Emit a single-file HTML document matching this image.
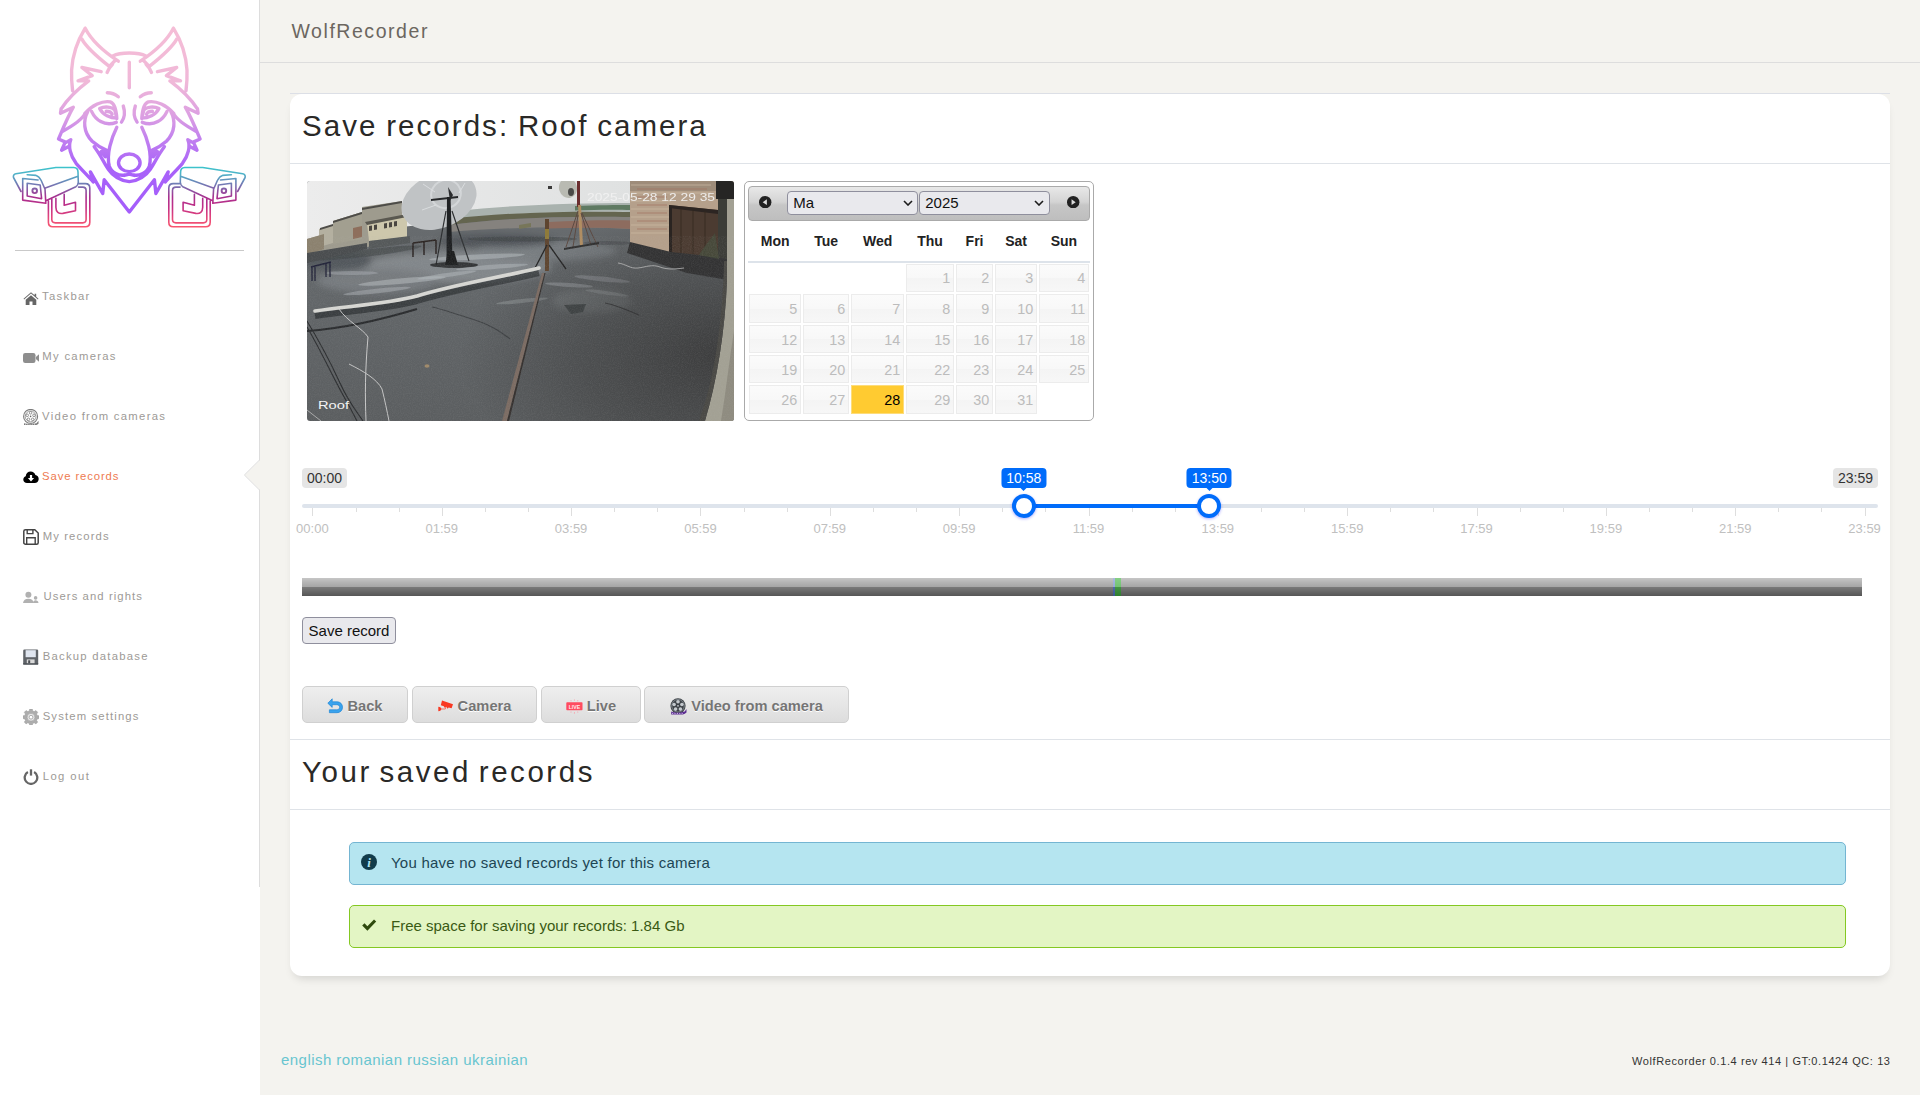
<!DOCTYPE html>
<html lang="en">
<head>
<meta charset="utf-8">
<title>WolfRecorder</title>
<style>
*{box-sizing:border-box}
html,body{margin:0;padding:0}
body{width:1920px;height:1095px;overflow:hidden;background:#f4f3ef;font-family:"Liberation Sans",sans-serif;color:#252422;position:relative}
a{text-decoration:none;color:inherit}
/* sidebar */
.sidebar{position:absolute;left:0;top:0;width:260px;height:1095px;background:#fff}
.sidebar .edge{position:absolute;left:259px;top:0;width:1px;height:887px;background:#ddd}
.sidebar .notch{position:absolute;left:244px;top:460px;width:16px;height:30px}
.logo{position:absolute;left:0;top:0;width:260px;height:240px}
.sidebar hr{position:absolute;left:15px;top:250px;width:229px;height:1px;border:0;margin:0;background:#c9c9c9}
.nav a{position:absolute;font-size:11.3px;line-height:14px;color:#9d9a96;white-space:nowrap}
.nav a.active{color:#ee7a51}
.nav i{position:absolute;top:-1px;width:16px;height:16px}.nav i{position:absolute;width:16px;height:16px}.nav i{position:absolute;width:16px;height:16px}.nav svg{display:block;width:16px;height:16px}
/* navbar */
.navbar{position:absolute;left:260px;top:0;width:1660px;height:63px;border-bottom:1px solid #ddd}
.brand{position:absolute;left:31.500px;top:19px;font-size:19.500px;line-height:24px;color:#6b6660;letter-spacing:1.550px;white-space:nowrap}
/* card */
.card{position:absolute;left:290px;top:94px;width:1600px;height:882px;background:#fff;border-radius:12px;box-shadow:0 6px 10px -4px rgba(0,0,0,.15)}
.cardtop{position:absolute;left:290px;top:93px;width:1600px;height:1px;background:#dcdfe6}
.card h2{position:absolute;left:11px;margin:0;font-weight:400;font-size:29.500px;line-height:36px;color:#2a2927;white-space:nowrap}
.card .rule{position:absolute;left:0;width:1600px;height:1px;background:#dfe3e8}
.cam{position:absolute;left:17px;top:87px;width:427px;height:240px;display:block}

/* datepicker */
.dp{position:absolute;left:454px;top:87px;width:350px;height:240px;border:1px solid #aaa;border-radius:5px;background:#fff;font-size:14px;color:#222}
.dp>*{position:absolute}
.dph{left:3.200px;top:3.500px;width:341.800px;height:35px;border:1px solid #aaa;border-radius:4px;background:linear-gradient(#e8e8e8 0,#d4d4d4 45%,#c6c6c6 55%,#bebebe 100%)}
.dph>*{position:absolute}
.dpi{top:9.300px;width:12.400px;height:12.400px}
.dpi svg{display:block;width:100%;height:100%}
.sel{top:4.800px;height:23.400px;border:1px solid #8f8f9d;border-radius:4px;background:#e9e9ed;font-size:15px;line-height:21px;padding-left:5px;color:#111}
.sel svg{position:absolute;right:4.500px;top:8px;width:10px;height:6px}
.dn{top:49px;height:20px;line-height:20px;text-align:center;font-weight:700;color:#222}
.dsep{left:3.200px;top:79px;width:341.800px;height:2px;background:#dde3ea}
.dc{font-size:14.400px;border:1px solid #ececec;background:linear-gradient(#fbfbfb 0,#f8f8f8 50%,#f4f4f4 51%,#f7f7f7 100%);color:#bcbcbc;text-align:right;padding-right:2.700px}
.dc.sel28{background:#ffcb31;border-color:#fddc7a;color:#000}
/* ion range slider (round) */
.irs{position:absolute;left:12px;top:374px;width:1576px;height:65px;font-size:14px}
.irs>*{position:absolute}
.irs-min,.irs-max{top:0;height:20px;line-height:20px;padding:0 5px;background:#e5e5e5;color:#333;border-radius:4px}
.irs-min{left:0}.irs-max{right:0}
.irs-line{left:0;top:36px;width:1576px;height:4px;border-radius:4px;background:#dee4ec}
.irs-bar{top:36px;height:4px;background:#006cfa}
.irs-lab{top:0;height:20px;line-height:20px;padding:0 5px;background:#006cfa;color:#fff;border-radius:4px;transform:translateX(-50%);white-space:nowrap}
.irs-lab:after{content:"";position:absolute;left:50%;bottom:-6px;margin-left:-3px;border:3px solid transparent;border-top-color:#006cfa}
.irs-h{top:26px;width:24px;height:24px;border:4px solid #006cfa;border-radius:24px;background:#fff;box-shadow:0 1px 3px rgba(0,0,255,.3)}
.gp{top:40px;width:1px;height:4px;background:#dedede}
.gp.big{height:8px}
.gt{top:56px;height:9px;line-height:9px;font-size:13px;color:silver;transform:translateX(-50%);white-space:nowrap}
.tl{position:absolute;left:12px;top:484px;width:1560px;height:18px;background:linear-gradient(#c6c6c6 0,#b4b4b4 25%,#a6a6a6 49%,#7a7a7a 50%,#686868 75%,#565656 100%)}
.tl i{position:absolute;top:0;height:18px}
.sbtn{position:absolute;left:12px;top:523px;width:94px;height:27px;border:1px solid #8f8f9d;border-radius:4px;background:#e9e9ed;font-size:15px;line-height:25px;text-align:center;color:#111;white-space:nowrap}
/* jquery ui buttons */
.btns{position:absolute;left:0;top:592px;width:1600px;height:37px}
.ub{position:absolute;top:0;height:37px;border:1px solid #d0d0d0;border-radius:5px;background:linear-gradient(#eeeeee 0,#e6e6e6 50%,#dddddd 100%);font-size:14.670px;font-weight:700;color:#757575;text-shadow:0 1px 0 #fff;text-align:center;white-space:nowrap;line-height:38px}
.ub span{display:inline-block;position:relative}
.ub .bi{text-shadow:none;display:inline-block;vertical-align:middle;margin:-2px 4px 0 0}
/* alerts */
.al{position:absolute;left:59px;width:1497px;height:43px;border-radius:5px;font-size:15px;line-height:18px;letter-spacing:.23px;white-space:nowrap}
.al svg{position:absolute;left:11px;top:11px;width:16px;height:16px}
.al span{position:absolute;left:41px;top:10.500px}
.al.info{background:#b5e5f0;border:1px solid #74b5d2;color:#1d4654}
.al.ok{background:#e3f5c4;border:1px solid #84c822;color:#3a5a14}
/* footer */
.langs{position:absolute;left:281px;top:1051px;font-size:15px;line-height:18px;color:#68c5d0;letter-spacing:.45px;white-space:nowrap}
.ver{position:absolute;right:30px;top:1054px;font-size:11px;line-height:15px;color:#333;letter-spacing:.59px;white-space:nowrap;margin-right:-.59px}
</style>
</head>
<body>
<div class="sidebar">
  <div class="edge"></div>
  <svg class="notch" viewBox="0 0 16 30"><path d="M16 0L.8 15L16 30Z" fill="#f4f3ef"/><path d="M15.500 0L.4 15L15.500 30" fill="none" stroke="#dcdcdc" stroke-width="1"/></svg>
  <!--LOGOSTART--><svg class="logo" viewBox="0 0 260 240" width="260" height="240">
<defs>
<linearGradient id="lgw" gradientUnits="userSpaceOnUse" x1="0" y1="27" x2="0" y2="212"><stop offset="0" stop-color="#f5bdd6"/><stop offset=".3" stop-color="#f0b8d8"/><stop offset=".48" stop-color="#dc9fe2"/><stop offset=".62" stop-color="#bf7df0"/><stop offset=".76" stop-color="#a962f9"/><stop offset="1" stop-color="#a45dfb"/></linearGradient>
<linearGradient id="lgc" gradientUnits="userSpaceOnUse" x1="0" y1="167" x2="0" y2="227"><stop offset="0" stop-color="#3cc3cb"/><stop offset=".12" stop-color="#4fb2c8"/><stop offset=".32" stop-color="#7a6fb0"/><stop offset=".5" stop-color="#a8308f"/><stop offset=".68" stop-color="#c42f86"/><stop offset=".85" stop-color="#e4477b"/><stop offset="1" stop-color="#f9566f"/></linearGradient>
</defs>
<g fill="none" stroke="url(#lgc)" stroke-width="1.600" stroke-linejoin="round" stroke-linecap="round"><path d="M 21.0,191.5 L 13.5,177.5 C 12.9,175.4 14.2,174.0 15.9,173.7 L 55.9,167.5 L 73.8,167.5 C 76.5,167.7 78.0,169.6 78.0,172.0 L 78.3,182.3 C 78.1,184.7 77.2,186.0 75.8,186.8 L 46.4,200.5 M 237.6,191.5 L 245.1,177.5 C 245.7,175.4 244.4,174.0 242.7,173.7 L 202.7,167.5 L 184.8,167.5 C 182.1,167.7 180.6,169.6 180.6,172.0 L 180.3,182.3 C 180.5,184.7 181.4,186.0 182.8,186.8 L 212.2,200.5 M 27.2,174.7 L 36.1,175.4 C 38.8,176.1 40.2,178.5 41.2,180.5 L 44.6,188.2 L 77.3,176.4 M 231.4,174.7 L 222.5,175.4 C 219.8,176.1 218.4,178.5 217.4,180.5 L 214.0,188.2 L 181.3,176.4 M 22.7,178.5 L 22.7,200.1 L 45.8,203.3 L 45.0,188.8 M 235.9,178.5 L 235.9,200.1 L 212.8,203.3 L 213.6,188.8 M 22.7,178.5 L 38.1,180.0 M 235.9,178.5 L 220.5,180.0 M 27.2,183.3 L 40.2,185.0 L 41.6,198.7 L 27.2,196.0 Z M 231.4,183.3 L 218.4,185.0 L 217.0,198.7 L 231.4,196.0 Z M 78.9,183.6 L 85.4,183.6 C 88.1,183.6 89.8,185.3 89.8,188.1 L 89.8,222.3 C 89.8,225.1 88.1,226.8 85.4,226.8 L 52.9,226.8 C 50.1,226.8 48.4,225.1 48.4,222.3 L 48.4,201.1 M 179.7,183.6 L 173.2,183.6 C 170.5,183.6 168.8,185.3 168.8,188.1 L 168.8,222.3 C 168.8,225.1 170.5,226.8 173.2,226.8 L 205.7,226.8 C 208.5,226.8 210.2,225.1 210.2,222.3 L 210.2,201.1 M 78.5,187.1 L 82.7,187.1 C 84.7,187.1 86.1,188.4 86.1,190.5 L 86.1,219.6 C 86.1,221.6 84.7,222.9 82.7,222.9 L 55.3,222.9 C 53.2,222.9 51.8,221.6 51.8,219.6 L 51.8,198.4 M 180.1,187.1 L 175.9,187.1 C 173.9,187.1 172.5,188.4 172.5,190.5 L 172.5,219.6 C 172.5,221.6 173.9,222.9 175.9,222.9 L 203.3,222.9 C 205.4,222.9 206.8,221.6 206.8,219.6 L 206.8,198.4 M 55.9,198.4 L 55.9,207.3 C 55.9,212.1 58.7,214.1 62.8,213.4 L 75.5,210.8 L 75.5,202.3 L 64.2,205.3 L 64.2,194.2 M 202.7,198.4 L 202.7,207.3 C 202.7,212.1 199.9,214.1 195.8,213.4 L 183.1,210.8 L 183.1,202.3 L 194.4,205.3 L 194.4,194.2"/><circle cx="34.7" cy="190.8" r="2.3" stroke-width="1.900"/><circle cx="223.9" cy="190.8" r="2.3" stroke-width="1.900"/></g>
<g fill="none" stroke="url(#lgw)" stroke-width="3.400" stroke-linejoin="round" stroke-linecap="round"><path d="M 85.2,28.2 C 79.1,38.1 72.6,53.1 71.6,70.2 C 71.3,78.3 71.9,85.3 72.6,90.8 M 173.4,28.2 C 179.5,38.1 186.0,53.1 187.0,70.2 C 187.3,78.3 186.7,85.3 186.0,90.8 M 85.2,28.2 C 90.2,38.1 100.2,49.1 118.3,61.2 M 173.4,28.2 C 168.4,38.1 158.4,49.1 140.3,61.2 M 81.9,39.1 C 86.2,47.1 95.2,55.2 109.3,66.4 L 115.9,59.8 M 176.7,39.1 C 172.4,47.1 163.4,55.2 149.3,66.4 L 142.7,59.8 M 112.5,64.2 C 109.5,67.2 107.9,69.7 107.1,72.4 M 146.1,64.2 C 149.1,67.2 150.7,69.7 151.5,72.4 M 101.2,71.7 L 81.9,67.5 L 92.2,75.7 L 78.1,80.8 L 88.7,80.9 C 80.1,87.3 68.1,98.3 61.2,108.9 M 157.4,71.7 L 176.7,67.5 L 166.4,75.7 L 180.5,80.8 L 169.9,80.9 C 178.5,87.3 190.5,98.3 197.4,108.9 M 107.3,92.8 C 111.3,92.8 115.3,94.3 118.3,96.8 M 151.3,92.8 C 147.3,92.8 143.3,94.3 140.3,96.8 M 112.8,56.0 C 120.3,51.9 138.4,51.9 145.9,56.0 M 129.3,62.2 L 129.3,87.8 M 61.2,108.6 L 60.5,113.3 L 73.3,107.2 C 68.1,116.1 63.1,128.2 58.5,139.0 L 66.1,142.4 L 70.8,139.7 C 68.1,146.2 70.1,155.3 76.1,163.3 C 79.1,166.8 88.2,176.4 93.2,181.9 L 90.4,171.9 L 102.7,193.5 L 104.2,179.7 L 129.3,212.0 M 197.4,108.6 L 198.1,113.3 L 185.3,107.2 C 190.5,116.1 195.5,128.2 200.1,139.0 L 192.5,142.4 L 187.8,139.7 C 190.5,146.2 188.5,155.3 182.5,163.3 C 179.5,166.8 170.4,176.4 165.4,181.9 L 168.2,171.9 L 155.9,193.5 L 154.4,179.7 L 129.3,212.0 M 65.1,142.4 L 61.6,150.3 L 68.7,146.4 M 193.5,142.4 L 197.0,150.3 L 189.9,146.4 M 85.4,112.9 C 82.1,120.1 72.1,126.2 62.3,131.4 M 173.2,112.9 C 176.5,120.1 186.5,126.2 196.3,131.4 M 84.7,113.6 C 92.2,105.1 102.2,100.5 110.3,101.9 C 114.3,103.1 116.3,110.1 116.8,118.6 M 173.9,113.6 C 166.4,105.1 156.4,100.5 148.3,101.9 C 144.3,103.1 142.3,110.1 141.8,118.6 M 87.7,111.6 C 83.1,120.1 83.1,132.2 92.2,141.2 C 97.2,145.7 102.2,148.3 106.7,150.3 M 170.9,111.6 C 175.5,120.1 175.5,132.2 166.4,141.2 C 161.4,145.7 156.4,148.3 151.9,150.3 M 91.7,111.6 C 95.2,119.1 104.2,127.2 116.3,122.3 M 166.9,111.6 C 163.4,119.1 154.4,127.2 142.3,122.3 M 99.7,108.6 C 104.2,106.1 112.3,106.6 114.8,110.1 L 116.8,118.1 C 110.3,118.1 103.2,115.1 99.7,108.6 M 158.9,108.6 C 154.4,106.1 146.3,106.6 143.8,110.1 L 141.8,118.1 C 148.3,118.1 155.4,115.1 158.9,108.6 M 106.2,111.3 C 109.3,111.3 111.5,112.6 112.1,114.4 M 152.4,111.3 C 149.3,111.3 147.1,112.6 146.5,114.4 M 123.3,106.1 C 125.3,112.1 124.3,118.1 121.5,122.1 M 135.3,106.1 C 133.3,112.1 134.3,118.1 137.1,122.1 M 116.8,127.2 C 111.3,138.2 106.2,154.3 109.3,166.3 C 111.3,172.4 119.3,176.4 124.8,175.0 M 141.8,127.2 C 147.3,138.2 152.4,154.3 149.3,166.3 C 147.3,172.4 139.3,176.4 133.8,175.0 M 94.2,146.7 C 100.2,154.3 104.2,163.3 108.3,169.3 C 112.3,175.4 120.3,180.9 129.3,181.6 M 164.4,146.7 C 158.4,154.3 154.4,163.3 150.3,169.3 C 146.3,175.4 138.3,180.9 129.3,181.6 M 101.2,151.5 L 105.7,150.5 L 105.2,156.8 Z M 157.4,151.5 L 152.9,150.5 L 153.4,156.8 Z M 124.3,175.4 L 129.3,174.2 M 134.3,175.4 L 129.3,174.2"/><ellipse cx="129.3" cy="162.8" rx="10.8" ry="8.8"/></g>
</svg><!--LOGOEND-->
  <hr>
  <div class="nav" id="nav">
<a style="top:289px;left:42.1px;letter-spacing:1.27px"><i style="left:-19.1px;top:2px"><svg viewBox="0 0 16 16"><path d="M8 1.300L.5 7.700l.6.700L8 2.600l6.900 5.800.6-.7-2.300-2V2.700h-1.600v1.600z" fill="#6a6a6a"/><path d="M8 4.300L2.700 8.800V14h3.800v-3.600h3V14h3.800V8.800z" fill="#666"/></svg></i>Taskbar</a>
<a style="top:349px;left:42.3px;letter-spacing:1.30px"><i style="left:-19.3px;top:0.5px"><svg viewBox="0 0 16 16"><rect x="0" y="3" width="12.500" height="10" rx="2.200" fill="#8e8e8e"/><path d="M12.900 7l3.100-2.800v7.600L12.900 9z" fill="#8e8e8e"/></svg></i>My cameras</a>
<a style="top:409px;left:42.1px;letter-spacing:1.29px"><i style="left:-19.1px;top:0px"><svg viewBox="0 0 16 16"><g fill="none" stroke="#7b7b7b"><circle cx="7.600" cy="7.400" r="7" stroke-width="1.100"/><circle cx="7.600" cy="7.400" r="5.400" stroke-width=".7"/><circle cx="7.600" cy="3.800" r="1.300" stroke-width=".8"/><circle cx="4.200" cy="6.300" r="1.300" stroke-width=".8"/><circle cx="11" cy="6.300" r="1.300" stroke-width=".8"/><circle cx="5.500" cy="10.300" r="1.300" stroke-width=".8"/><circle cx="9.700" cy="10.300" r="1.300" stroke-width=".8"/></g><circle cx="7.600" cy="7.400" r=".8" fill="#666"/><path d="M1 14.300c3.500 1 8.500 1 12.500 0l2-2.600v3c-1 .9-2 1.200-3 1.300H1z" fill="#7b7b7b"/><path d="M2.200 15.200h.9M4.400 15.200h.9M6.600 15.200h.9M8.800 15.200h.9M11 15.200h.9" stroke="#fff" stroke-width=".8"/></svg></i>Video from cameras</a>
<a class="active" style="top:469px;left:42.1px;letter-spacing:0.89px"><i style="left:-19.1px;top:0px"><svg viewBox="0 0 16 16"><path d="M4 14c-2.100 0-3.700-1.500-3.700-3.500 0-1.600 1-2.900 2.400-3.300C3 4.600 5 2.600 7.700 2.600c2.200 0 4.100 1.400 4.700 3.400 1.900.3 3.300 1.900 3.300 3.900 0 2.300-1.800 4.100-4 4.100z" fill="#000"/><path d="M6.900 6h2.200v3h2L8 12.400 4.900 9h2z" fill="#fff"/></svg></i>Save records</a>
<a style="top:529px;left:42.7px;letter-spacing:1.11px"><i style="left:-19.7px;top:0px"><svg viewBox="0 0 16 16"><path d="M2.500.8h9.300l3.400 3.200v9.700c0 .9-.7 1.500-1.600 1.500H2.500c-.9 0-1.700-.6-1.700-1.500V2.300C.8 1.400 1.600.8 2.500.8z" fill="none" stroke="#444" stroke-width="1.500"/><path d="M4.200 1v3.600h5.700V1M3.700 15V8.800h8.500V15" fill="none" stroke="#444" stroke-width="1.400"/></svg></i>My records</a>
<a style="top:589px;left:43.5px;letter-spacing:1.08px"><i style="left:-20.5px;top:1px"><svg viewBox="0 0 16 16"><circle cx="5.400" cy="4.700" r="3" fill="#b1b1b1"/><path d="M0 13c.3-2.800 2.400-4.300 5.400-4.300s5 1.500 5.400 4.300z" fill="#b1b1b1"/><circle cx="12.600" cy="7.900" r="1.800" fill="#b1b1b1"/><path d="M10 13c.2-1.900 1.100-2.700 2.600-2.700s2.700.8 2.900 2.700z" fill="#b1b1b1"/></svg></i>Users and rights</a>
<a style="top:649px;left:42.7px;letter-spacing:1.25px"><i style="left:-19.7px;top:0px"><svg viewBox="0 0 16 16"><rect x=".2" y=".6" width="15" height="15" rx="1.200" fill="#5f6368"/><rect x="2.600" y="1.200" width="10.200" height="7" fill="#dfe5ef"/><rect x="3.800" y="10.400" width="7.800" height="4.600" fill="#d9d9d9"/><rect x="5.200" y="11.300" width="2" height="3" fill="#4a4d52"/><rect x=".2" y="14.200" width="15" height="1.400" fill="#4d5156"/></svg></i>Backup database</a>
<a style="top:709px;left:42.7px;letter-spacing:1.14px"><i style="left:-19.7px;top:0px"><svg viewBox="0 0 16 16"><path d="M6.700 0h2.600l.4 2 1.500.6 1.700-1.100 1.800 1.800-1.100 1.700.6 1.500 2 .4v2.600l-2 .4-.6 1.500 1.100 1.700-1.800 1.800-1.700-1.100-1.500.6-.4 2H6.700l-.4-2-1.500-.6-1.700 1.100-1.800-1.800 1.100-1.700-.6-1.500-2-.4V6.900l2-.4.600-1.500-1.100-1.700 1.800-1.800 1.700 1.100 1.500-.6z" fill="#adadad" stroke="#9a9a9a" stroke-width=".5"/><circle cx="8" cy="8.200" r="3.900" fill="#e8e8e8"/><circle cx="8" cy="8.200" r="3.900" fill="none" stroke="#9d9d9d" stroke-width=".6"/><circle cx="8" cy="8.200" r="1.900" fill="#fff" stroke="#a5a5a5" stroke-width=".9"/></svg></i>System settings</a>
<a style="top:769px;left:42.8px;letter-spacing:1.38px"><i style="left:-19.8px;top:0px"><svg viewBox="0 0 16 16"><path d="M4.900 3.100A6.300 6.300 0 1 0 11.100 3.100" fill="none" stroke="#666" stroke-width="2.300"/><path d="M8 .3v6.300" stroke="#666" stroke-width="2.300"/></svg></i>Log out</a>
</div>
</div>
<div class="navbar"><a class="brand">WolfRecorder</a></div>
<div class="cardtop"></div>
<div class="card">
  <h2 style="top:13.700px;left:12px;letter-spacing:2.050px;word-spacing:-1.500px">Save records: Roof camera</h2>
  <div class="rule" style="top:69px"></div>
  <!--CAMSTART--><svg class="cam" viewBox="0 0 427 240" width="427" height="240">
<defs>
<linearGradient id="cg1" x1="0" y1="0" x2="0" y2="1"><stop offset="0" stop-color="#6b6f72"/><stop offset=".35" stop-color="#64686b"/><stop offset="1" stop-color="#5b5e60"/></linearGradient>
<radialGradient id="cg2" cx=".98" cy=".72" r=".62"><stop offset="0" stop-color="#2d2c2c" stop-opacity=".7"/><stop offset=".55" stop-color="#333" stop-opacity=".4"/><stop offset="1" stop-color="#333" stop-opacity="0"/></radialGradient>
<linearGradient id="cg3" x1="0" y1="0" x2="1" y2="0"><stop offset="0" stop-color="#ececec"/><stop offset="1" stop-color="#dfe1e1"/></linearGradient>
<filter id="cb1" x="-10%" y="-10%" width="120%" height="120%"><feGaussianBlur stdDeviation="3"/></filter>
<filter id="cb2"><feGaussianBlur stdDeviation=".6"/></filter>
<filter id="cn" x="0" y="0" width="100%" height="100%"><feTurbulence type="fractalNoise" baseFrequency=".9" numOctaves="2" seed="4"/><feColorMatrix values="0 0 0 0 .5  0 0 0 0 .5  0 0 0 0 .5  0 0 0 .55 -.18"/></filter>
<clipPath id="cc"><rect width="427" height="240" rx="3"/></clipPath>
</defs>
<g clip-path="url(#cc)">
<rect width="427" height="240" fill="url(#cg1)"/>
<!-- wet reflections -->
<g filter="url(#cb1)" opacity=".8">
<ellipse cx="150" cy="86" rx="95" ry="16" fill="#8a8f93"/>
<ellipse cx="70" cy="100" rx="60" ry="12" fill="#7b8084"/>
<ellipse cx="240" cy="70" rx="70" ry="10" fill="#7f8488"/>
<ellipse cx="285" cy="120" rx="40" ry="12" fill="#777b7e"/>
<ellipse cx="30" cy="80" rx="35" ry="10" fill="#50555a"/>
<ellipse cx="190" cy="60" rx="60" ry="6" fill="#4a4e52"/>
</g>
<g filter="url(#cb2)" fill="#b4b9bd">
<ellipse cx="170" cy="76" rx="48" ry="2.600" opacity=".55" transform="rotate(-3 170 76)"/>
<ellipse cx="185" cy="86" rx="36" ry="2.200" opacity=".5" transform="rotate(-4 185 86)"/>
<ellipse cx="95" cy="100" rx="44" ry="2.800" opacity=".55" transform="rotate(-5 95 100)"/>
<ellipse cx="70" cy="110" rx="34" ry="2.200" opacity=".45" transform="rotate(-6 70 110)"/>
<ellipse cx="140" cy="94" rx="30" ry="2" opacity=".5" transform="rotate(-8 140 94)"/>
<ellipse cx="45" cy="92" rx="26" ry="2" opacity=".4"/>
<ellipse cx="262" cy="104" rx="24" ry="2" opacity=".45" transform="rotate(4 262 104)"/>
<ellipse cx="295" cy="98" rx="28" ry="2.400" opacity=".4" transform="rotate(6 295 98)"/>
<ellipse cx="215" cy="120" rx="26" ry="2" opacity=".35" transform="rotate(-6 215 120)"/>
<ellipse cx="300" cy="112" rx="22" ry="1.800" opacity=".35" transform="rotate(8 300 112)"/>
</g>
<g filter="url(#cb2)" fill="#3c4044">
<ellipse cx="60" cy="72" rx="55" ry="3.500" opacity=".5" transform="rotate(-7 60 72)"/>
<ellipse cx="215" cy="58" rx="55" ry="2.500" opacity=".5"/>
<ellipse cx="300" cy="62" rx="24" ry="2" opacity=".4"/>
</g>
<rect width="427" height="240" fill="url(#cg2)"/>
<!-- sky -->
<path d="M0 0H330V32C270 30 200 33 150 40C100 46 40 50 0 60Z" fill="url(#cg3)"/>
<!-- far right horizon: fence, field, parapet -->
<path d="M150 30C200 24 270 22 325 22V31C270 30 200 32 150 38Z" fill="#a9b2ae"/>
<path d="M268 25C290 24 310 24 325 24V29C310 28.500 290 28.500 268 29.500Z" fill="#5f7a62"/>
<path d="M142 38C200 31 270 30 325 31V36C270 35 200 36 142 44Z" fill="#64654f"/>
<path d="M142 44C200 36 270 35 325 36V48C270 45 200 46 142 51Z" fill="#85827e"/>
<path d="M242 41C270 39.500 300 39 325 39.500V48C300 46.500 270 46.500 242 47.500Z" fill="#8d6c5f"/>
<path d="M212 44l12-2v4l-12 2z" fill="#77765a"/>
<!-- left buildings -->
<path d="M0 58L18 53V47L26 44V40L55 31V26L95 20V60L60 66L0 78Z" fill="#9e9b8e"/>
<path d="M12 48L26 44V62L12 66Z" fill="#b4b0a0"/>
<path d="M26 40L55 31V58L26 63Z" fill="#a29f90"/>
<path d="M55 27L95 20V22L55 29ZM26 40L55 31V33L26 42ZM13 47L26 43V45L13 49Z" fill="#4d4c48"/>
<path d="M60 42L100 35V56L62 60Z" fill="#cdc7ac"/>
<path d="M58 41L100 33V36L60 44Z" fill="#5a5850"/>
<path d="M62 60L103 55V62L62 68Z" fill="#55595a"/>
<path d="M62 45l3-.6v5l-3 .6zm5-1l3-.6v5l-3 .6zm10-1.5l3-.6v5l-3 .6zm5-1l3-.6v5l-3 .6zm5-1l3-.6v5l-3 .6z" fill="#4a4640"/>
<path d="M46 47L55 45V56L46 58Z" fill="#8e6f5c"/>
<path d="M0 58L17 53V68L0 74Z" fill="#8c826f"/>
<path d="M0 72L60 62V68L0 82Z" fill="#4a4d4f"/>
<!-- big dish -->
<g>
<ellipse cx="132" cy="20" rx="39" ry="27" transform="rotate(-22 132 20)" fill="#c0c3c5"/>
<ellipse cx="139" cy="13" rx="15" ry="14" transform="rotate(-22 139 13)" fill="none" stroke="#d3d6d8" stroke-width="2"/>
<path d="M116 3l12 8M115 29l14-5M158 2l-6 10" stroke="#d9dcde" stroke-width="1" fill="none"/>
<path d="M124 18l27-3v2l-27 3z" fill="#26282a"/>
<path d="M140 16l3.500 0 2 62h-6z" fill="#1f2123"/>
<path d="M141 6l5 8-3 6z" fill="#2a2c2e"/>
<path d="M139 30L129 84M145 30l17 50" stroke="#2e3032" stroke-width="1.2" fill="none"/>
<path d="M138 84l3-14h6l4 14z" fill="#1d1e1f"/>
<ellipse cx="147" cy="84" rx="24" ry="3" fill="#222324" opacity=".8"/>
</g>
<!-- small frames -->
<path d="M106 62v14M117 60v14M129 59v14M106 62l23-3" stroke="#2d2624" stroke-width="1.5" fill="none"/>
<path d="M5 86v14M8 86v14M19 82v14M23 82v14M4 86l20-5" stroke="#23243a" stroke-width="1.3" fill="none"/>
<!-- right dish + poles -->
<ellipse cx="261" cy="7" rx="9" ry="10" transform="rotate(-15 261 7)" fill="#b9bab2"/>
<ellipse cx="264" cy="11" rx="3" ry="4" fill="#4a4a48"/>
<path d="M242 8c6 8 14 8 22 12" stroke="#e4e4e4" stroke-width=".8" fill="none"/>
<rect x="241" y="5" width="4" height="3" fill="#3b3b3b"/>
<rect x="270" y="0" width="3" height="26" fill="#6a2e2f"/>
<path d="M271 24l3 0 2 42h-3z" fill="#b08d62"/>
<path d="M271 30L259 66M271 34l-5 32M274 32l10 32M275 32l16 34" stroke="#5c4a42" stroke-width="1" fill="none"/>
<path d="M257 67l35-6v2l-35 6z" fill="#2f2f2f"/>
<rect x="238" y="38" width="4" height="52" fill="#5e4530"/>
<rect x="238" y="48" width="4" height="10" fill="#8f7b3a"/>
<path d="M240 64L227 89M242 64l17 24" stroke="#262626" stroke-width="1.3" fill="none"/>
<!-- brick building -->
<path d="M323 0H427V86L323 62Z" fill="#b5a08b"/>
<path d="M323 0H410V10H323Z" fill="#8f7f6f" opacity=".6"/>
<path d="M324 4h80M324 12h80M324 20h40M324 28h38M324 36h38M324 44h38M324 52h38" stroke="#c9b8a4" stroke-width="1.6" opacity=".5"/>
<path d="M330 8h70M330 16h30M330 24h30M330 32h30M330 40h30M330 48h30" stroke="#a2705e" stroke-width="1.6" opacity=".45"/>
<path d="M362 24L411 29V76L364 72Z" fill="#4b3b31"/>
<path d="M362 24L411 29V33L362 27Z" fill="#2c2522"/>
<path d="M374 28v45M386 29v46M398 30v46" stroke="#33291f" stroke-width="1" opacity=".8"/>
<path d="M362 26l3 0v46l-3-1z" fill="#2a2421"/>
<path d="M409 0H427V18H409Z" fill="#262524"/><path d="M411 18H421V80L411 76Z" fill="#3c3d38"/>
<path d="M323 61L364 71L411 76L427 80V100L380 92L320 72Z" fill="#333334"/>
<path d="M392 74c5-8 10-14 16-22l4 26z" fill="#464c3c" opacity=".85"/>
<!-- right wall strip -->
<path d="M420 18H427V240H398C410 200 418 150 420 100Z" fill="#a3a194"/>
<path d="M417 80C416 130 409 195 392 240H398C410 200 418 150 420 100V80Z" fill="#4a4945"/>
<path d="M427 150c-5 30-8 60-13 90h13z" fill="#8f8c80"/>
<!-- wavy cable -->
<path d="M311 82c8 1 12 6 20 5s14-4 22-1 16 2 24 1" stroke="#b9b9b9" stroke-width=".8" fill="none"/>
<!-- white log -->
<path d="M8 131C40 126 80 124 110 116C150 104 190 98 232 88" stroke="#1e2022" stroke-width="6" fill="none" opacity=".55" transform="translate(0 4)"/>
<path d="M8 130C40 125 80 123 110 115C150 103 190 97 232 87" stroke="#d8d8d4" stroke-width="3.600" fill="none" stroke-linecap="round"/>
<path d="M0 150C30 148 70 140 110 128" stroke="#2a2c2e" stroke-width="2" fill="none"/>
<!-- rail -->
<path d="M235 92L195 240H200L237.500 92Z" fill="#7c6c63"/>
<path d="M237.500 92L200 240H202L238.500 92Z" fill="#35302e"/>
<!-- puddle + crack -->
<path d="M257 124l22-1-3 8-12 2z" fill="#3f4344"/>
<path d="M125 126c10 2 20 6 40 12s30 14 38 20" stroke="#3a3c3e" stroke-width="1.2" fill="none" opacity=".8"/>
<path d="M298 122c10 2 20 6 34 12" stroke="#2f3031" stroke-width="1.2" fill="none" opacity=".8"/>
<!-- cables -->
<path d="M0 140C12 160 22 178 32 200S48 228 56 240M0 146C14 170 26 196 36 214S46 232 50 240" stroke="#2c2e30" stroke-width="1.1" fill="none"/>
<path d="M32 128C40 140 56 148 61 156C58 190 58 215 59 240" stroke="#c9c9c9" stroke-width="1" fill="none"/>
<path d="M42 183C56 190 70 198 75 208C78 220 80 230 82 240" stroke="#c4c4c4" stroke-width="1" fill="none"/>
<path d="M0 229l14 11" stroke="#bdbdbd" stroke-width=".8"/>
<ellipse cx="120" cy="185" rx="2.500" ry="1.700" fill="#a08a6a"/>
<!-- noise -->
<rect y="55" width="427" height="185" filter="url(#cn)" opacity=".35"/>
</g>
<text x="280" y="19.500" font-family="'Liberation Sans',sans-serif" font-size="10.500" fill="#f2f2f2" textLength="128" lengthAdjust="spacingAndGlyphs" opacity=".92">2025-05-28 12 29 35</text>
<text x="11" y="228" font-family="'Liberation Sans',sans-serif" font-size="10" fill="#f4f4f4" textLength="31" lengthAdjust="spacingAndGlyphs">Roof</text>
</svg>
<!--CAMEND-->
  <!--CALSTART--><div class="dp">
<div class="dph"><span class="dpi" style="left:10px"><svg viewBox="0 0 12 12"><circle cx="6" cy="6" r="6" fill="#222"/><path d="M7.600 3.200v5.600L3.600 6z" fill="#dcdcdc"/></svg></span><span class="sel" style="left:38.100px;width:131.100px">Ma<svg viewBox="0 0 10 6"><path d="M1 1l4 4 4-4" fill="none" stroke="#1c1c1c" stroke-width="1.600"/></svg></span><span class="sel" style="left:170.100px;width:130.400px">2025<svg viewBox="0 0 10 6"><path d="M1 1l4 4 4-4" fill="none" stroke="#1c1c1c" stroke-width="1.600"/></svg></span><span class="dpi" style="left:318px"><svg viewBox="0 0 12 12"><circle cx="6" cy="6" r="6" fill="#222"/><path d="M4.400 3.200v5.600L8.400 6z" fill="#dcdcdc"/></svg></span></div>
<span class="dn" style="left:3.2px;width:53.85px">Mon</span>
<span class="dn" style="left:57.05px;width:48.1px">Tue</span>
<span class="dn" style="left:105.15px;width:54.9px">Wed</span>
<span class="dn" style="left:160.05px;width:49.9px">Thu</span>
<span class="dn" style="left:209.95px;width:39.25px">Fri</span>
<span class="dn" style="left:249.2px;width:43.8px">Sat</span>
<span class="dn" style="left:293px;width:51.8px">Sun</span>
<div class="dsep"></div>
<span class="dc" style="left:161px;top:82px;width:48px;height:28px;line-height:26.5px">1</span>
<span class="dc" style="left:211px;top:82px;width:37px;height:28px;line-height:26.5px">2</span>
<span class="dc" style="left:250px;top:82px;width:42px;height:28px;line-height:26.5px">3</span>
<span class="dc" style="left:294px;top:82px;width:50px;height:28px;line-height:26.5px">4</span>
<span class="dc" style="left:4px;top:112px;width:52px;height:29px;line-height:29.5px">5</span>
<span class="dc" style="left:58px;top:112px;width:46px;height:29px;line-height:29.5px">6</span>
<span class="dc" style="left:106px;top:112px;width:53px;height:29px;line-height:29.5px">7</span>
<span class="dc" style="left:161px;top:112px;width:48px;height:29px;line-height:29.5px">8</span>
<span class="dc" style="left:211px;top:112px;width:37px;height:29px;line-height:29.5px">9</span>
<span class="dc" style="left:250px;top:112px;width:42px;height:29px;line-height:29.5px">10</span>
<span class="dc" style="left:294px;top:112px;width:50px;height:29px;line-height:29.5px">11</span>
<span class="dc" style="left:4px;top:143px;width:52px;height:28px;line-height:28.5px">12</span>
<span class="dc" style="left:58px;top:143px;width:46px;height:28px;line-height:28.5px">13</span>
<span class="dc" style="left:106px;top:143px;width:53px;height:28px;line-height:28.5px">14</span>
<span class="dc" style="left:161px;top:143px;width:48px;height:28px;line-height:28.5px">15</span>
<span class="dc" style="left:211px;top:143px;width:37px;height:28px;line-height:28.5px">16</span>
<span class="dc" style="left:250px;top:143px;width:42px;height:28px;line-height:28.5px">17</span>
<span class="dc" style="left:294px;top:143px;width:50px;height:28px;line-height:28.5px">18</span>
<span class="dc" style="left:4px;top:173px;width:52px;height:28px;line-height:28.5px">19</span>
<span class="dc" style="left:58px;top:173px;width:46px;height:28px;line-height:28.5px">20</span>
<span class="dc" style="left:106px;top:173px;width:53px;height:28px;line-height:28.5px">21</span>
<span class="dc" style="left:161px;top:173px;width:48px;height:28px;line-height:28.5px">22</span>
<span class="dc" style="left:211px;top:173px;width:37px;height:28px;line-height:28.5px">23</span>
<span class="dc" style="left:250px;top:173px;width:42px;height:28px;line-height:28.5px">24</span>
<span class="dc" style="left:294px;top:173px;width:50px;height:28px;line-height:28.5px">25</span>
<span class="dc" style="left:4px;top:203px;width:52px;height:29px;line-height:29.5px">26</span>
<span class="dc" style="left:58px;top:203px;width:46px;height:29px;line-height:29.5px">27</span>
<span class="dc sel28" style="left:106px;top:203px;width:53px;height:29px;line-height:29.5px">28</span>
<span class="dc" style="left:161px;top:203px;width:48px;height:29px;line-height:29.5px">29</span>
<span class="dc" style="left:211px;top:203px;width:37px;height:29px;line-height:29.5px">30</span>
<span class="dc" style="left:250px;top:203px;width:42px;height:29px;line-height:29.5px">31</span>
</div><!--CALEND-->
  <!--SLIDERSTART--><div class="irs">
<span class="irs-min">00:00</span><span class="irs-max">23:59</span>
<span class="irs-line"></span>
<span class="gp big" style="left:10.40px"></span><span class="gt" style="left:10.40px">00:00</span>
<span class="gp" style="left:53.52px"></span>
<span class="gp" style="left:96.63px"></span>
<span class="gp big" style="left:139.75px"></span><span class="gt" style="left:139.75px">01:59</span>
<span class="gp" style="left:182.87px"></span>
<span class="gp" style="left:225.98px"></span>
<span class="gp big" style="left:269.10px"></span><span class="gt" style="left:269.10px">03:59</span>
<span class="gp" style="left:312.22px"></span>
<span class="gp" style="left:355.33px"></span>
<span class="gp big" style="left:398.45px"></span><span class="gt" style="left:398.45px">05:59</span>
<span class="gp" style="left:441.57px"></span>
<span class="gp" style="left:484.68px"></span>
<span class="gp big" style="left:527.80px"></span><span class="gt" style="left:527.80px">07:59</span>
<span class="gp" style="left:570.92px"></span>
<span class="gp" style="left:614.03px"></span>
<span class="gp big" style="left:657.15px"></span><span class="gt" style="left:657.15px">09:59</span>
<span class="gp" style="left:700.27px"></span>
<span class="gp" style="left:743.38px"></span>
<span class="gp big" style="left:786.50px"></span><span class="gt" style="left:786.50px">11:59</span>
<span class="gp" style="left:829.62px"></span>
<span class="gp" style="left:872.73px"></span>
<span class="gp big" style="left:915.85px"></span><span class="gt" style="left:915.85px">13:59</span>
<span class="gp" style="left:958.97px"></span>
<span class="gp" style="left:1002.08px"></span>
<span class="gp big" style="left:1045.20px"></span><span class="gt" style="left:1045.20px">15:59</span>
<span class="gp" style="left:1088.32px"></span>
<span class="gp" style="left:1131.43px"></span>
<span class="gp big" style="left:1174.55px"></span><span class="gt" style="left:1174.55px">17:59</span>
<span class="gp" style="left:1217.67px"></span>
<span class="gp" style="left:1260.78px"></span>
<span class="gp big" style="left:1303.90px"></span><span class="gt" style="left:1303.90px">19:59</span>
<span class="gp" style="left:1347.02px"></span>
<span class="gp" style="left:1390.13px"></span>
<span class="gp big" style="left:1433.25px"></span><span class="gt" style="left:1433.25px">21:59</span>
<span class="gp" style="left:1476.37px"></span>
<span class="gp" style="left:1519.48px"></span>
<span class="gp big" style="left:1562.60px"></span><span class="gt" style="left:1562.60px">23:59</span>
<span class="irs-bar" style="left:721.8px;width:185.4px"></span>
<span class="irs-lab" style="left:721.8px">10:58</span><span class="irs-lab" style="left:907.2px">13:50</span>
<span class="irs-h" style="left:709.8px"></span><span class="irs-h" style="left:895.2px"></span>
</div>
<div class="tl"><i style="left:811.100px;width:1.900px;background:linear-gradient(#aab9e2 0,#98a8d6 49%,#5068a8 50%,#3c5596 100%)"></i><i style="left:813px;width:6px;background:linear-gradient(#86cf86 0,#74c274 49%,#439443 50%,#2f7d2f 100%)"></i></div>
<span class="sbtn">Save record</span><!--SLIDEREND-->
  <!--BUTTONSSTART--><div class="btns">
<a class="ub" style="left:12px;width:106px"><span><svg class="bi" style="width:16px;height:16px" viewBox="0 0 16 16"><path d="M5.200 .8L.8 5.200l4.400 4.200V6.700h4.600c1.700 0 2.900 1 2.900 2.500s-1.200 2.600-2.900 2.600H2.400v2.900h7.600c3.200 0 5.500-2.300 5.500-5.500s-2.300-5.400-5.500-5.400H5.200z" fill="#3aa3ee" stroke="#1f86d6" stroke-width=".7"/></svg>Back</span></a>
<a class="ub" style="left:122px;width:125px"><span><svg class="bi" style="width:16px;height:12px" viewBox="0 0 16 12"><path d="M4 .4l11 3.900-1.400 4-3-.9-.9 1.300-1.500-1.900-1.600.9-.8-1.500L2.800 5.200z" fill="#f93822"/><path d="M.3 6.800c2 0 3 1 3 2.200s-1 2.200-3 2.200z" fill="#f93822"/><path d="M3 9h4.300l.5-2" fill="none" stroke="#f5685a" stroke-width=".9"/></svg>Camera</span></a>
<a class="ub" style="left:251px;width:100px"><span><svg class="bi" style="width:17px;height:15px" viewBox="0 0 17 15"><rect x=".3" y="3.300" width="16.200" height="8" rx=".8" fill="#ff4b5f"/><text x="8.400" y="9.500" font-family="'Liberation Sans',sans-serif" font-size="5.200" font-weight="700" fill="#ffe9ec" text-anchor="middle" textLength="11.500" lengthAdjust="spacingAndGlyphs">LIVE</text><g fill="#ff8b98"><circle cx="5" cy="1.800" r=".5"/><circle cx="8.400" cy="1" r=".55"/><circle cx="11.800" cy="1.800" r=".5"/><circle cx="5" cy="13" r=".5"/><circle cx="8.400" cy="13.900" r=".55"/><circle cx="11.800" cy="13" r=".5"/></g></svg>Live</span></a>
<a class="ub" style="left:354px;width:205px"><span><svg class="bi" style="width:17px;height:17px" viewBox="0 0 17 17"><circle cx="8" cy="7.800" r="7.600" fill="#3d4247"/><circle cx="8" cy="7.800" r="6.300" fill="none" stroke="#8d949b" stroke-width=".8"/><g fill="#c4c9ce"><circle cx="8" cy="3.700" r="1.800"/><circle cx="4.100" cy="6.500" r="1.800"/><circle cx="11.900" cy="6.500" r="1.800"/><circle cx="5.600" cy="11.100" r="1.800"/><circle cx="10.400" cy="11.100" r="1.800"/><circle cx="8" cy="7.800" r=".9"/></g><path d="M1.200 13.600c3 1.500 9 1.500 13.500 0l1.800-2.600v3.600c-1 .9-2 1.500-3.500 1.900H1.200z" fill="#5c2d91"/><path d="M2 15.400h1.200M4.400 15.400h1.200M6.800 15.400h1.200M9.200 15.400h1.200M11.600 15.400h1.200" stroke="#d9c6ef" stroke-width=".9"/></svg>Video from camera</span></a>
</div><!--BUTTONSEND-->
  <div class="rule" style="top:645px"></div>
  <h2 style="top:660px;left:12px;letter-spacing:2.550px;word-spacing:-3px">Your saved records</h2>
  <div class="rule" style="top:715px"></div>
  <!--ALERTSSTART--><div class="al info" style="top:748px"><svg viewBox="0 0 16 16"><circle cx="8" cy="8" r="8" fill="#123c4b"/><text x="8.200" y="12.600" font-family="'Liberation Serif',serif" font-style="italic" font-weight="700" font-size="13" fill="#b5e5f0" text-anchor="middle">i</text></svg><span>You have no saved records yet for this camera</span></div>
<div class="al ok" style="top:811px"><svg viewBox="0 0 16 16"><path d="M1.200 8.600l2.300-2.300 2.900 2.900L13 2.400l2.200 2.200-8.800 9.200z" fill="#2f4a0e"/></svg><span style="letter-spacing:0">Free space for saving your records: 1.84 Gb</span></div><!--ALERTSEND-->
</div>
<div class="langs"><a>english</a> <a>romanian</a> <a>russian</a> <a>ukrainian</a></div>
<div class="ver">WolfRecorder 0.1.4 rev 414 | GT:0.1424 QC: 13</div>
</body>
</html>
